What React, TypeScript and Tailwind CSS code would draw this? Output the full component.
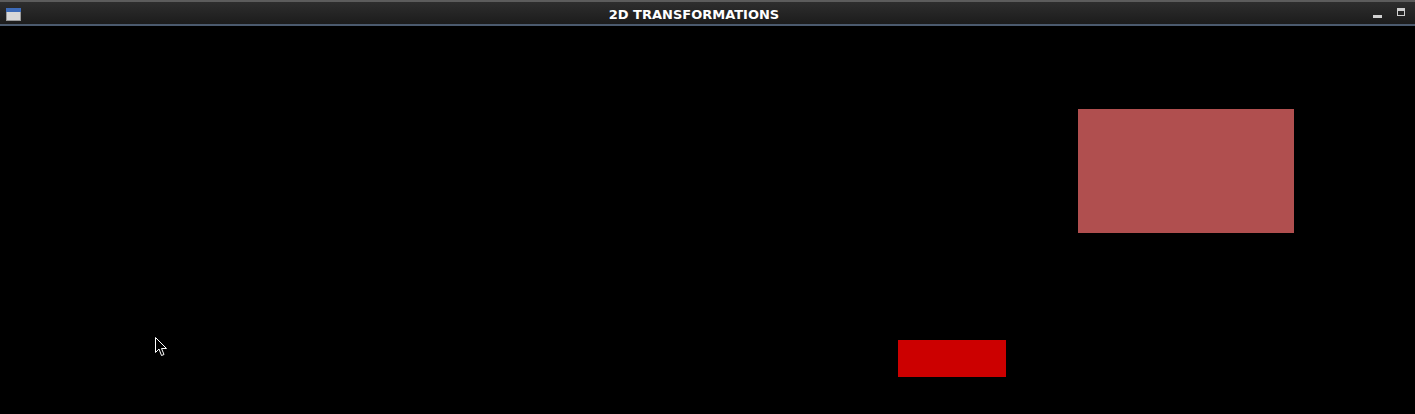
const AppIcon = () => (
  <svg width="15" height="13" viewBox="0 0 15 13">
    <rect x="0.5" y="0.5" width="14" height="12" fill="#d8d8d8" stroke="#9a9a9a" />
    <rect x="0.5" y="0.5" width="14" height="3" fill="#3d6bb8" stroke="#3d6bb8" />
  </svg>
);

const Cursor = () => (
  <svg width="13" height="20" viewBox="0 0 13 20">
    <path
      d="M0.5 0.5 L0.5 15.5 L4 12 L6.5 18.5 L9 17.5 L6.5 11.5 L11.5 11.5 Z"
      fill="#000"
      stroke="#fff"
      strokeWidth="1"
    />
  </svg>
);

export default function App() {
  return (
    <div className="flex h-[414px] w-[1415px] flex-col overflow-hidden bg-black font-['DejaVu_Sans',sans-serif]">
      <div className="relative flex h-[26px] shrink-0 items-center border-t-2 border-b-2 border-t-[#5c5c5c] border-b-[#4b5a6e] bg-gradient-to-b from-[#2e2e2e] to-[#1c1c1c]">
        <div className="pl-[6px] pt-[2px]">
          <AppIcon />
        </div>
        <div className="flex-1 pr-[6px] pt-[2px] text-center text-[13px] font-bold leading-none text-white">
          2D TRANSFORMATIONS
        </div>
        <div className="flex items-center gap-[15px] pr-[10px]">
          <div className="mt-[6px] h-[3px] w-[9px] bg-[#d0d0d0]" />
          <div className="mb-[2px] h-[8px] w-[8px] border border-t-[3px] border-[#d0d0d0]" />
        </div>
      </div>
      <div className="relative flex-1">
        <div className="absolute left-[1078px] top-[83px] h-[124px] w-[216px] bg-[#b04f4f]" />
        <div className="absolute left-[898px] top-[314px] h-[37px] w-[108px] bg-[#cc0000]" />
        <div className="absolute left-[155px] top-[311px]">
          <Cursor />
        </div>
      </div>
    </div>
  );
}
